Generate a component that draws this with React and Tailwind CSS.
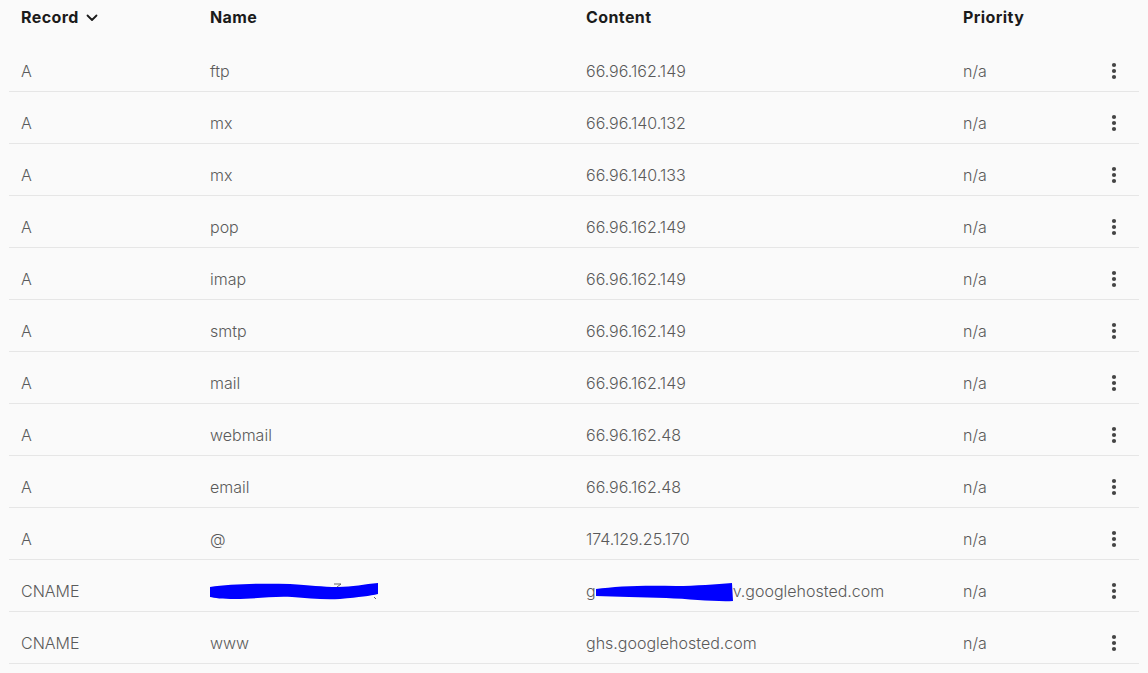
import React from "react";

const rows = [
  ["A", "ftp", "66.96.162.149"],
  ["A", "mx", "66.96.140.132"],
  ["A", "mx", "66.96.140.133"],
  ["A", "pop", "66.96.162.149"],
  ["A", "imap", "66.96.162.149"],
  ["A", "smtp", "66.96.162.149"],
  ["A", "mail", "66.96.162.149"],
  ["A", "webmail", "66.96.162.48"],
  ["A", "email", "66.96.162.48"],
  ["A", "@", "174.129.25.170"],
  ["CNAME", "__redacted_name__", "__redacted_content__"],
  ["CNAME", "www", "ghs.googlehosted.com"],
];

function Dots() {
  return (
    <svg width="6" height="18" viewBox="0 0 6 18" className="block">
      <circle cx="3" cy="3" r="2.1" fill="#444" />
      <circle cx="3" cy="9" r="2.1" fill="#444" />
      <circle cx="3" cy="15" r="2.1" fill="#444" />
    </svg>
  );
}

function RedactName() {
  return (
    <svg width="170" height="24" viewBox="0 0 170 24" className="block">
      <path d="M124 5 L 131 5 L 127 8" stroke="#666" strokeWidth="1" fill="none" />
      <path
        d="M0 8 C 20 5, 50 4, 80 5 C 100 6, 112 8, 128 8 C 142 8, 155 5, 168 4 L 168 15 C 160 17, 150 18, 130 20 C 112 21, 98 19, 82 18 C 62 17, 45 20, 25 20 C 12 20, 4 19, 0 18 Z"
        fill="#0000ff"
      />
      <path d="M164 18 L 166 20" stroke="#666" strokeWidth="1" fill="none" />
    </svg>
  );
}

function RedactContent() {
  return (
    <span className="inline-flex items-start whitespace-nowrap">
      <span>g</span>
      <svg width="137" height="24" viewBox="0 0 137 24" className="block">
        <path
          d="M0 10 C 20 7, 50 6, 80 7 C 100 7, 120 5, 136 4 L 137 22 C 120 23, 95 20, 70 19 C 45 18, 20 18, 0 17 Z"
          fill="#0000ff"
        />
      </svg>
      <span>v.googlehosted.com</span>
    </span>
  );
}

export default function App() {
  return (
    <div
      className="w-[1148px] h-[673px] overflow-hidden bg-[#fafafa] px-[9px]"
      style={{ fontFamily: "Inter, 'Open Sans', sans-serif" }}
    >
      <div className="grid grid-cols-[189px_376px_377px_1fr_50px] h-[40px] pt-[7px] text-[16px] leading-[20px] font-bold tracking-[0.4px] text-[#1b1b1b]">
        <div className="pl-[12px] flex items-start gap-[7px]">
          <span>Record</span>
          <svg width="12" height="8" viewBox="0 0 12 8" className="mt-[7px]">
            <path d="M1.5 1.5 L6 6 L10.5 1.5" stroke="#1b1b1b" strokeWidth="1.8" fill="none" strokeLinecap="round" strokeLinejoin="round" />
          </svg>
        </div>
        <div className="pl-[12px]">Name</div>
        <div className="pl-[12px]">Content</div>
        <div className="pl-[12px]">Priority</div>
        <div />
      </div>
      {rows.map((r, i) => (
        <div
          key={i}
          className="grid grid-cols-[189px_376px_377px_1fr_50px] h-[52px] pt-[19px] border-b border-[#e6e6e6] text-[16px] leading-[24px] font-light text-[#5a5a5a]"
        >
          <div className="pl-[12px]">{r[0]}</div>
          <div className="pl-[12px]">
            {r[1] === "__redacted_name__" ? <RedactName /> : r[1]}
          </div>
          <div className="pl-[12px]">
            {r[2] === "__redacted_content__" ? <RedactContent /> : r[2]}
          </div>
          <div className="pl-[12px]">n/a</div>
          <div className="flex justify-center pt-[3px]">
            <Dots />
          </div>
        </div>
      ))}
    </div>
  );
}
